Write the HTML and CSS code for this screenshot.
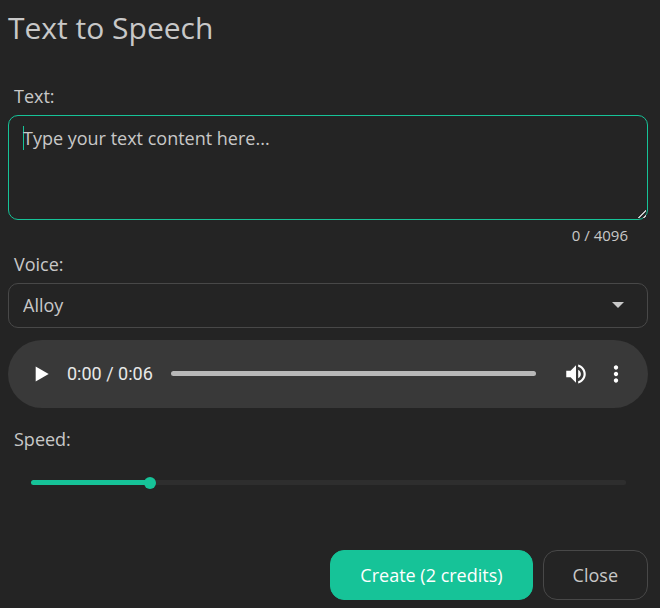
FILE: index.html
```html
<!DOCTYPE html>
<html lang="en">
<head>
  <meta charset="UTF-8">
  <meta name="viewport" content="width=device-width, initial-scale=1.0">
  <title>Text to Speech</title>
  <link rel="stylesheet" href="styles.css">
</head>
<body>
  <form class="dialog">
    <h1>Text to Speech</h1>

    <!-- Text -->
    <label class="label" for="text">Text:</label>
    <textarea id="text" class="text-input" maxlength="4096" placeholder="Type your text content here..." autofocus></textarea>
    <div class="counter">0 / 4096</div>

    <!-- Voice -->
    <label class="label" for="voice">Voice:</label>
    <div class="select">
      <select id="voice">
        <option selected>Alloy</option>
        <option>Echo</option>
        <option>Fable</option>
        <option>Onyx</option>
        <option>Nova</option>
        <option>Shimmer</option>
      </select>
      <svg class="arrow" viewBox="0 0 12 6" width="12" height="6"><path d="M0 0h12L6 6z"/></svg>
    </div>

    <!-- Voice preview -->
    <div class="player">
      <button type="button" class="icon-button" aria-label="Play">
        <svg viewBox="0 0 24 24" width="26" height="26"><path d="M8 5v14l12-7z"/></svg>
      </button>
      <span class="time">0:00 / 0:06</span>
      <input type="range" class="timeline" min="0" max="6" value="0" aria-label="Position">
      <button type="button" class="icon-button" aria-label="Mute">
        <svg viewBox="0 0 24 24" width="26" height="26"><path d="M3 9v6h4l5 5V4L7 9H3zm13.500 3c0-1.770-1.020-3.290-2.500-4.030v8.050c1.480-.730 2.500-2.250 2.500-4.020zM14 3.230v2.060c2.890.860 5 3.540 5 6.710s-2.110 5.850-5 6.710v2.060c4.010-.910 7-4.490 7-8.770s-2.990-7.860-7-8.770z"/></svg>
      </button>
      <button type="button" class="icon-button" aria-label="More options">
        <svg viewBox="0 0 24 24" width="26" height="26"><path d="M12 8c1.100 0 2-.900 2-2s-.900-2-2-2-2 .900-2 2 .900 2 2 2zm0 2c-1.100 0-2 .900-2 2s.900 2 2 2 2-.900 2-2-.900-2-2-2zm0 6c-1.100 0-2 .900-2 2s.900 2 2 2 2-.900 2-2-.900-2-2-2z"/></svg>
      </button>
    </div>

    <!-- Speed -->
    <label class="label" for="speed">Speed:</label>
    <input type="range" id="speed" class="slider" min="0.25" max="4" step="0.25" value="1">

    <div class="buttons">
      <button type="submit" class="button primary">Create (2 credits)</button>
      <button type="button" class="button">Close</button>
    </div>
  </form>
</body>
</html>
```

FILE: styles.css
```css
* {
  box-sizing: border-box;
}

body {
  margin: 0;
  background: #242424;
  color: #c8c8c8;
  font-family: 'Open Sans', sans-serif;
  font-size: 18px;
  line-height: 24px;
}

button, select, textarea {
  font: inherit;
  color: inherit;
}

.dialog {
  display: flex;
  flex-direction: column;
  padding: 8px 12px 8px 8px;
}

h1 {
  margin: 0 0 36px;
  font-size: 30px;
  font-weight: 400;
  line-height: 40px;
}

.label {
  padding-left: 6px;
  margin-bottom: 7px;
}

/* Text box */
.text-input {
  height: 105px;
  padding: 10px 14px;
  background: transparent;
  border: 1px solid #16c398;
  border-radius: 10px;
  caret-color: #16c398;
  outline: none;
  resize: vertical;
}

.text-input:placeholder-shown {
  background: linear-gradient(#16c398, #16c398) 14px 10px / 1px 24px no-repeat;
}

.text-input::placeholder {
  color: #c8c8c8;
}

.text-input::-webkit-resizer {
  background: linear-gradient(135deg, transparent 5px, #c8c8c8 5px, #c8c8c8 7px, transparent 7px, transparent 9px, #c8c8c8 9px, #c8c8c8 10px, transparent 10px) 6px 6px / 8px 8px no-repeat;
}

.counter {
  padding: 3px 20px 0 0;
  margin-bottom: 5px;
  font-size: 15px;
  text-align: right;
}

/* Voice drop-down */
.select {
  position: relative;
}

.select select {
  display: block;
  width: 100%;
  height: 45px;
  padding: 0 14px 2px;
  appearance: none;
  background: transparent;
  border: 1px solid #484848;
  border-radius: 10px;
}

.arrow {
  position: absolute;
  top: 19px;
  right: 24px;
  fill: #c8c8c8;
  pointer-events: none;
}

/* Audio player */
.player {
  display: flex;
  align-items: center;
  height: 68px;
  padding: 0 12px 1px;
  margin: 12px 0 19px;
  background: #393939;
  border-radius: 34px;
}

.icon-button {
  display: flex;
  align-items: center;
  justify-content: center;
  flex: none;
  width: 40px;
  height: 40px;
  padding: 0;
  background: none;
  border: none;
}

.icon-button svg {
  fill: #fff;
}

.time {
  margin: 0 18px 0 7px;
  color: #e8e8e8;
  font-family: Roboto, sans-serif;
}

.timeline {
  flex: 1;
  min-width: 0;
  height: 5px;
  margin: 0 20px 0 0;
  appearance: none;
  background: #b8b8b8;
  border-radius: 3px;
}

.timeline::-webkit-slider-thumb {
  appearance: none;
  width: 1px;
  height: 5px;
}

/* Speed slider */
.slider {
  height: 5px;
  margin: 22px 22px 0 23px;
  appearance: none;
  background: linear-gradient(to right, #16c398 20%, #2e2e2e 20%);
  border-radius: 3px;
}

/* Track is wider than the bar, so the thumb can reach both ends */
.slider::-webkit-slider-runnable-track {
  height: 12px;
  margin: 0 -6px;
}

.slider::-webkit-slider-thumb {
  appearance: none;
  width: 12px;
  height: 12px;
  background: #16c398;
  border-radius: 50%;
}

/* Buttons */
.buttons {
  display: flex;
  justify-content: flex-end;
  gap: 10px;
  margin-top: 65px;
}

.button {
  height: 50px;
  padding: 0 29px;
  background: transparent;
  border: 1px solid #484848;
  border-radius: 14px;
}

.primary {
  background: #16c398;
  border-color: #16c398;
  color: #fff;
}
```
